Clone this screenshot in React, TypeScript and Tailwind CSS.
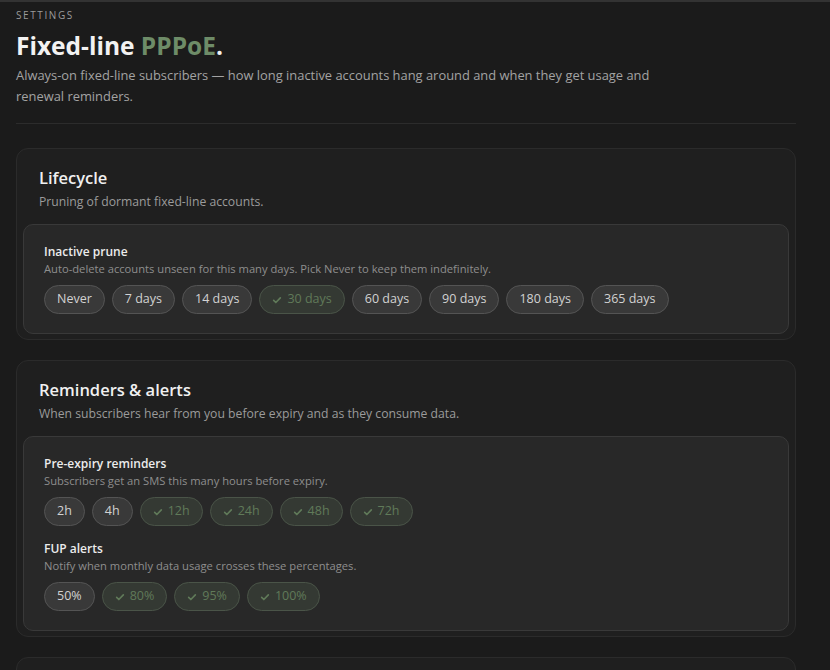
import React from 'react';

type Chip = { label: string; on?: boolean };

const Check = () => (
  <svg className="w-[10px] h-[10px] mr-[5px]" viewBox="0 0 12 12" fill="none" stroke="currentColor" strokeWidth={2} strokeLinecap="round" strokeLinejoin="round">
    <path d="M2 6.5l2.6 2.5L10 3.5" />
  </svg>
);

const ChipRow: React.FC<{ chips: Chip[] }> = ({ chips }) => (
  <div className="flex flex-wrap gap-[7px] mt-2">
    {chips.map((c) => (
      <button
        key={c.label}
        className={`h-[29px] px-[12px] rounded-full border flex items-center text-[12.5px] ${
          c.on
            ? 'bg-[#343933] border-[#4a5448] text-[#607a59]'
            : 'bg-[#393939] border-[#545454] text-[#d2d2d2]'
        }`}
      >
        {c.on && <Check />}
        {c.label}
      </button>
    ))}
  </div>
);

const Field: React.FC<{ title: string; hint: string; chips: Chip[]; className?: string }> = ({ title, hint, chips, className }) => (
  <div className={className}>
    <div className="text-[12px] leading-[18px] font-semibold text-[#ececec]">{title}</div>
    <div className="text-[11.2px] leading-[16px] text-[#8e8e8e]">{hint}</div>
    <ChipRow chips={chips} />
  </div>
);

const Section: React.FC<{ title: string; desc: string; children: React.ReactNode }> = ({ title, desc, children }) => (
  <section className="bg-[#1f1f1f] border border-[#2b2b2b] rounded-[12px] px-[6px] pt-[17px] pb-[5px]">
    <div className="px-4">
      <h2 className="text-[16.5px] leading-[24px] font-semibold text-[#f0f0f0]">{title}</h2>
      <p className="text-[12.2px] leading-[20px] mt-[2px] text-[#9b9b9b]">{desc}</p>
    </div>
    <div className="mt-3 bg-[#282828] border border-[#393939] rounded-[10px] px-5 pt-[18px] pb-[19px]">
      {children}
    </div>
  </section>
);

export default function App() {
  return (
    <div
      className="min-h-[670px] bg-[#1b1b1b] border-t-2 border-[#333333] text-white"
      style={{ fontFamily: '"Open Sans", "Noto Sans", sans-serif' }}
    >
      <div className="w-[780px] ml-4 pt-[6px]">
        <header className="border-b border-[#2c2c2c] pb-[16px]">
          <div className="text-[10px] leading-[14px] tracking-[0.16em] text-[#9a9a9a]">SETTINGS</div>
          <h1 className="mt-[8px] text-[24.5px] leading-[32px] font-bold text-[#f2f2f2]">
            Fixed-line <span className="text-[#6e8c68]">PPPoE</span>.
          </h1>
          <p className="mt-[3px] max-w-[650px] text-[12.9px] leading-[21px] text-[#a3a3a3]">
            Always-on fixed-line subscribers — how long inactive accounts hang around and when they get usage and renewal reminders.
          </p>
        </header>

        <div className="mt-[24px] flex flex-col gap-[20px]">
          <Section title="Lifecycle" desc="Pruning of dormant fixed-line accounts.">
            <Field
              title="Inactive prune"
              hint="Auto-delete accounts unseen for this many days. Pick Never to keep them indefinitely."
              chips={[
                { label: 'Never' },
                { label: '7 days' },
                { label: '14 days' },
                { label: '30 days', on: true },
                { label: '60 days' },
                { label: '90 days' },
                { label: '180 days' },
                { label: '365 days' },
              ]}
            />
          </Section>

          <Section title="Reminders & alerts" desc="When subscribers hear from you before expiry and as they consume data.">
            <Field
              title="Pre-expiry reminders"
              hint="Subscribers get an SMS this many hours before expiry."
              chips={[
                { label: '2h' },
                { label: '4h' },
                { label: '12h', on: true },
                { label: '24h', on: true },
                { label: '48h', on: true },
                { label: '72h', on: true },
              ]}
            />
            <Field
              className="mt-[14px]"
              title="FUP alerts"
              hint="Notify when monthly data usage crosses these percentages."
              chips={[
                { label: '50%' },
                { label: '80%', on: true },
                { label: '95%', on: true },
                { label: '100%', on: true },
              ]}
            />
          </Section>

          <section className="bg-[#1f1f1f] border border-[#2b2b2b] rounded-[12px] h-[120px]" />
        </div>
      </div>
    </div>
  );
}
